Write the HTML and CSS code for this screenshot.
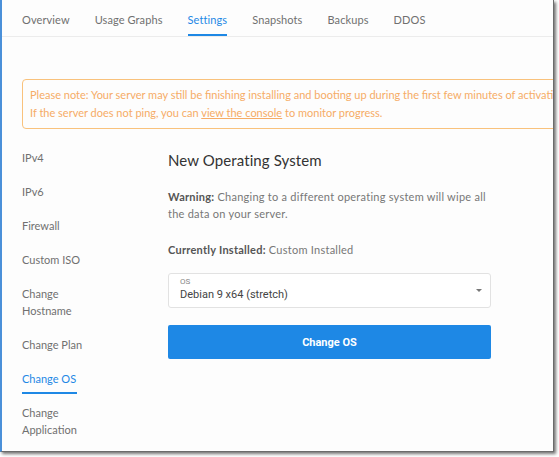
FILE: index.html
```html
<!DOCTYPE html>
<html>
<head>
<meta charset="utf-8">
<link rel="stylesheet" href="styles.css">
</head>
<body>
<div class="frame">
  <nav class="tabs">
    <span class="tab">Overview</span>
    <span class="tab">Usage Graphs</span>
    <span class="tab active">Settings</span>
    <span class="tab">Snapshots</span>
    <span class="tab">Backups</span>
    <span class="tab">DDOS</span>
  </nav>
  <div class="notice">
    <p>Please note: Your server may still be finishing installing and booting up during the first few minutes of activation.</p>
    <p>If the server does not ping, you can <u>view the console</u> to monitor progress.</p>
  </div>
  <div class="body">
    <ul class="side">
      <li>IPv4</li>
      <li>IPv6</li>
      <li>Firewall</li>
      <li>Custom ISO</li>
      <li>Change<br>Hostname</li>
      <li>Change Plan</li>
      <li class="current">Change OS</li>
      <li>Change<br>Application</li>
    </ul>
    <section class="main">
      <h2>New Operating System</h2>
      <p class="warn"><b>Warning:</b> Changing to a different operating system will wipe all the data on your server.</p>
      <p class="installed"><b>Currently Installed:</b> Custom Installed</p>
      <div class="select">
        <span class="lbl">OS</span>
        <span class="val">Debian 9 x64 (stretch)</span>
        <span class="caret"></span>
      </div>
      <button class="btn">Change OS</button>
    </section>
  </div>
</div>
</body>
</html>
```
FILE: styles.css
```css
* { box-sizing: border-box; }
html, body { margin: 0; padding: 0; background: #fff; }
body { width: 559px; height: 457px; overflow: hidden; font-family: "Lato", "Open Sans", sans-serif; }
.frame {
  width: 554px;
  height: 452px;
  background: #fdfdfd;
  border-left: 2px solid #4a90d9;
  border-right: 1px solid #6b6b6b;
  border-bottom: 1px solid #6b6b6b;
  box-shadow: 2px 2px 3px rgba(0,0,0,0.55);
  overflow: hidden;
}
.tabs {
  display: flex;
  gap: 25px;
  padding-left: 20px;
  height: 37px;
  border-bottom: 1px solid #ececec;
  font-size: 11px;
  letter-spacing: 0.1px;
  color: #707070;
}
.tab { padding-top: 13px; height: 36px; }
.tab.active { color: #1e88e5; border-bottom: 2px solid #1e88e5; }
.notice {
  margin: 42px 0 0 20px;
  width: 560px;
  height: 50px;
  border: 1px solid #f9c27c;
  border-radius: 4px;
  padding: 6px 0 0 7px;
  color: #f6ac66;
  font-size: 11px;
  line-height: 18px;
  white-space: nowrap;
}
.notice p { margin: 0; }
.body { display: flex; padding-left: 20px; margin-top: 20px; }
.side {
  list-style: none;
  margin: 0;
  padding: 0;
  width: 146px;
  font-size: 11px;
  color: #707070;
  line-height: 17px;
}
.side li { margin-bottom: 17px; }
.side li.current {
  color: #1e88e5;
  display: inline-block;
  border-bottom: 2px solid #1e88e5;
  padding: 0 1px 5px 0;
  margin-bottom: 10px;
}
.main { width: 323px; }
.main h2 { margin: 1px 0 0; font-size: 15px; font-weight: 400; color: #333; line-height: 20px; letter-spacing: 0.1px; }
.warn { margin: 18px 0 0; font-size: 11px; line-height: 17px; color: #777; letter-spacing: 0.25px; }
.warn b, .installed b { color: #555; }
.installed { margin: 19px 0 0; font-size: 11px; line-height: 17px; color: #777; letter-spacing: 0.25px; }
.select {
  position: relative;
  margin-top: 15px;
  height: 35px;
  border: 1px solid #e2e2e2;
  border-radius: 3px;
  background: #fff;
  padding: 3px 0 0 11px;
  font-family: "Roboto", sans-serif;
}
.lbl { display: block; font-size: 8px; color: #888; line-height: 10px; }
.val { display: block; font-size: 11px; color: #444; line-height: 15px; }
.caret {
  position: absolute;
  right: 8px;
  top: 15px;
  border-left: 3px solid transparent;
  border-right: 3px solid transparent;
  border-top: 3px solid #777;
}
.btn {
  display: block;
  margin-top: 17px;
  width: 323px;
  height: 34px;
  border: 0;
  border-radius: 2px;
  background: #1e88e5;
  color: #fff;
  font-family: "Roboto", sans-serif;
  font-weight: 700;
  font-size: 11px;
}
```
